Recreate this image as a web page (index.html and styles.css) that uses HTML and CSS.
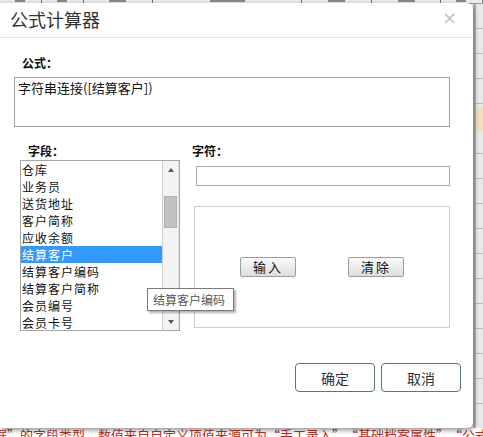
FILE: index.html
```html
<!DOCTYPE html>
<html lang="zh">
<head>
<meta charset="utf-8">
<title>公式计算器</title>
<link rel="stylesheet" href="styles.css">
</head>
<body>
<div class="page">
  <div class="grid-head">
    <span class="hc"></span><span class="hc"></span><span class="hc w2"></span><span class="hc w3"></span><span class="hc w2"></span><span class="hc w2"></span><span class="hc"></span>
  </div>
  <div class="side"><div class="side-hl"></div></div>
  <div class="note">据”的字段类型，数值来自自定义项值来源可为“手工录入”，“基础档案属性”，“公式计算”</div>

  <div class="dialog">
    <div class="dlg-head">
      <span class="dlg-title">公式计算器</span>
      <span class="dlg-close">×</span>
    </div>
    <div class="dlg-body">
      <div class="lbl lbl-formula">公式：</div>
      <div class="formula">字符串连接([结算客户])</div>

      <div class="row">
        <div class="col-left">
          <div class="lbl">字段：</div>
          <div class="listbox">
            <ul class="items">
              <li>仓库</li>
              <li>业务员</li>
              <li>送货地址</li>
              <li>客户简称</li>
              <li>应收余额</li>
              <li class="sel">结算客户</li>
              <li>结算客户编码</li>
              <li>结算客户简称</li>
              <li>会员编号</li>
              <li>会员卡号</li>
            </ul>
            <div class="scrollbar">
              <span class="arrow up"></span>
              <span class="thumb"></span>
              <span class="arrow down"></span>
            </div>
          </div>
          <div class="tooltip">结算客户编码</div>
        </div>
        <div class="col-right">
          <div class="lbl">字符：</div>
          <div class="char-input"></div>
          <div class="btn-box">
            <button class="btn-small">输入</button>
            <button class="btn-small">清除</button>
          </div>
        </div>
      </div>

      <div class="footer">
        <button class="btn-main">确定</button>
        <button class="btn-main">取消</button>
      </div>
    </div>
  </div>
</div>
</body>
</html>
```
FILE: styles.css
```css
* { box-sizing: border-box; }
html, body { margin: 0; padding: 0; }
body {
  width: 483px;
  height: 437px;
  overflow: hidden;
  font-family: "Noto Sans CJK SC", "Liberation Sans", sans-serif;
  background: #ffffff;
}
.page {
  position: relative;
  width: 483px;
  height: 437px;
  overflow: hidden;
  background: #ffffff;
}
.grid-head {
  display: flex;
  height: 4px;
  overflow: hidden;
  background: #ececec;
  border-bottom: 1px solid #9a9a9a;
}
.hc {
  width: 42px;
  height: 4px;
  border-right: 1px solid #7a7a7a;
  background: linear-gradient(to right, transparent 30%, #8a8a8a 30%, #8a8a8a 70%, transparent 70%) no-repeat center top / 60% 2px;
}
.hc.w2 { width: 70px; }
.hc.w3 { width: 150px; }
.side {
  position: absolute;
  left: 473px;
  top: 4px;
  width: 10px;
  height: 424px;
  background-color: #e9e9e9;
  background-image: repeating-linear-gradient(to bottom, transparent 0, transparent 24px, #bdbdbd 24px, #bdbdbd 25px);
  border-left: 3px solid #b5b5b5;
}
.side-hl {
  margin-top: 103px;
  height: 24px;
  background: #f4dcc0;
}
.note {
  position: absolute;
  left: -6px;
  top: 426px;
  white-space: nowrap;
  font-size: 13px;
  line-height: 18px;
  color: #b8321e;
}

/* dialog overlay */
.dialog {
  position: absolute;
  left: 0;
  top: 3px;
  width: 473px;
  height: 425px;
  background: #ffffff;
  border-radius: 0 6px 6px 0;
  box-shadow: 1px 2px 5px rgba(0, 0, 0, 0.45);
  display: flex;
  flex-direction: column;
}
.dlg-head {
  height: 35px;
  border-bottom: 1px solid #e3e3e3;
  display: flex;
  align-items: center;
  justify-content: space-between;
  padding: 0 16px 0 10px;
}
.dlg-title {
  font-size: 18px;
  color: #333;
  line-height: 34px;
  margin-top: -2px;
}
.dlg-close {
  font-family: "DejaVu Sans", sans-serif;
  font-size: 18px;
  color: #c4c4c4;
  line-height: 20px;
  margin-top: -4px;
}
.dlg-body {
  flex: 1;
  display: flex;
  flex-direction: column;
  padding: 0 12px 0 14px;
}
.lbl {
  font-size: 12px;
  font-weight: bold;
  line-height: 16px;
  height: 16px;
  color: #111;
  padding-left: 8px;
}
.lbl-formula {
  margin-top: 17px;
}
.formula {
  margin-top: 6px;
  width: 436px;
  height: 50px;
  border: 1px solid #a3a3a3;
  font-size: 13px;
  line-height: 16px;
  padding: 2px 3px;
  color: #111;
}
.row {
  display: flex;
  margin-top: 16px;
  gap: 12px;
}
.col-left {
  position: relative;
  padding-left: 6px;
  width: 166px;
}
.listbox {
  margin-top: 1px;
  width: 160px;
  height: 171px;
  border: 1px solid #a7a7a7;
  display: flex;
}
.items {
  list-style: none;
  margin: 0;
  padding: 0;
  width: 141px;
  overflow: hidden;
}
.items li {
  height: 17px;
  line-height: 17px;
  font-size: 12px;
  letter-spacing: 1px;
  padding-left: 1px;
  color: #111;
  white-space: nowrap;
}
.items li.sel {
  background: #3399ff;
  color: #ffffff;
}
.scrollbar {
  width: 17px;
  border-left: 1px solid #c9d0d8;
  border-right: 1px solid #dfe3e8;
  background: #f3f3f3;
  display: flex;
  flex-direction: column;
  align-items: center;
  position: relative;
}
.arrow {
  width: 0;
  height: 0;
  border-left: 3px solid transparent;
  border-right: 3px solid transparent;
}
.arrow.up {
  margin-top: 7px;
  border-bottom: 4px solid #555;
}
.arrow.down {
  margin-top: auto;
  margin-bottom: 6px;
  border-top: 4px solid #555;
}
.thumb {
  margin-top: 24px;
  width: 13px;
  height: 32px;
  background: #c2c2c2;
  border: 1px solid #b0b0b0;
}
.tooltip {
  position: absolute;
  left: 133px;
  top: 145px;
  width: 87px;
  height: 23px;
  background: #ffffff;
  border: 1px solid #7a7a7a;
  box-shadow: 2px 2px 2px rgba(0, 0, 0, 0.3);
  font-size: 12px;
  line-height: 21px;
  color: #575757;
  padding-left: 5px;
  white-space: nowrap;
}
.col-right {
  width: 258px;
}
.col-right .lbl {
  padding-left: 0;
}
.char-input {
  margin-top: 7px;
  margin-left: 4px;
  width: 254px;
  height: 20px;
  border: 1px solid #a9a9a9;
}
.btn-box {
  margin-top: 20px;
  margin-left: 2px;
  width: 256px;
  height: 122px;
  border: 1px solid #cfcfcf;
  display: flex;
  align-items: center;
  justify-content: center;
  gap: 52px;
}
.btn-small {
  width: 56px;
  height: 20px;
  padding: 0;
  font-family: "Noto Sans CJK SC", sans-serif;
  font-size: 13px;
  line-height: 18px;
  letter-spacing: 2px;
  color: #111;
  border: 1px solid #9c9c9c;
  border-radius: 2px;
  background: linear-gradient(to bottom, #fafafa, #dedede);
}
.footer {
  display: flex;
  justify-content: flex-end;
  gap: 6px;
  margin-top: 32px;
}
.btn-main {
  width: 80px;
  height: 29px;
  padding: 0;
  font-family: "Noto Sans CJK SC", sans-serif;
  font-size: 14px;
  color: #333;
  background: #ffffff;
  border: 1px solid #55777d;
  border-radius: 4px;
}
```
